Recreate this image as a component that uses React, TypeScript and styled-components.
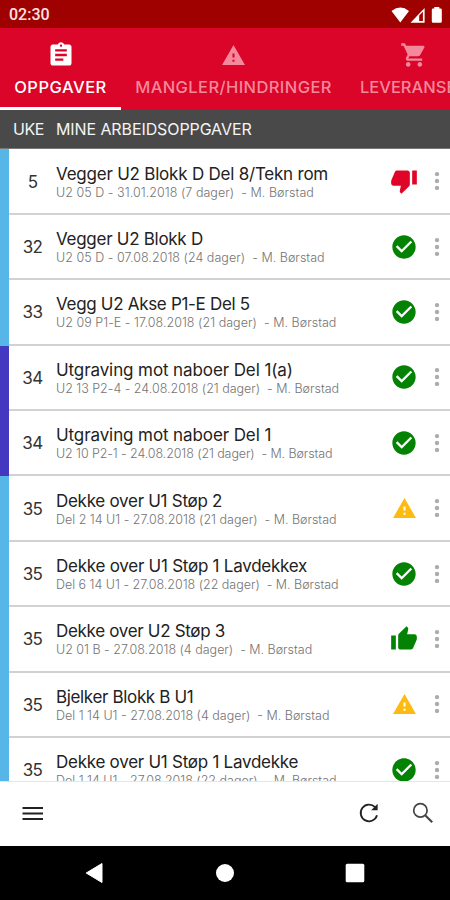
import React from "react";
import styled, { createGlobalStyle } from "styled-components";
import {
  MdAssignment,
  MdWarning,
  MdShoppingCart,
  MdThumbDown,
  MdThumbUp,
  MdCheckCircle,
} from "react-icons/md";

type Status = "rejected" | "done" | "warning" | "approved";

interface Task {
  week: number;
  title: string;
  detail: string;
  status: Status;
  color: string;
  titleSpacing: number;
  detailSpacing: number;
}

const SKY = "#57b6e8";
const INDIGO = "#4338bf";

const tasks: Task[] = [
  { week: 5, title: "Vegger U2 Blokk D Del 8/Tekn rom", detail: "U2 05 D - 31.01.2018 (7 dager)  - M. Børstad", status: "rejected", color: SKY, titleSpacing: -0.22, detailSpacing: 0.04 },
  { week: 32, title: "Vegger U2 Blokk D", detail: "U2 05 D - 07.08.2018 (24 dager)  - M. Børstad", status: "done", color: SKY, titleSpacing: -0.28, detailSpacing: 0.03 },
  { week: 33, title: "Vegg U2 Akse P1-E Del 5", detail: "U2 09 P1-E - 17.08.2018 (21 dager)  - M. Børstad", status: "done", color: SKY, titleSpacing: -0.31, detailSpacing: 0.03 },
  { week: 34, title: "Utgraving mot naboer Del 1(a)", detail: "U2 13 P2-4 - 24.08.2018 (21 dager)  - M. Børstad", status: "done", color: INDIGO, titleSpacing: -0.1, detailSpacing: -0.02 },
  { week: 34, title: "Utgraving mot naboer Del 1", detail: "U2 10 P2-1 - 24.08.2018 (21 dager)  - M. Børstad", status: "done", color: INDIGO, titleSpacing: -0.1, detailSpacing: -0.1 },
  { week: 35, title: "Dekke over U1 Støp 2", detail: "Del 2 14 U1 - 27.08.2018 (21 dager)  - M. Børstad", status: "warning", color: SKY, titleSpacing: -0.28, detailSpacing: -0.01 },
  { week: 35, title: "Dekke over U1 Støp 1 Lavdekkex", detail: "Del 6 14 U1 - 27.08.2018 (22 dager)  - M. Børstad", status: "done", color: SKY, titleSpacing: -0.25, detailSpacing: -0.02 },
  { week: 35, title: "Dekke over U2 Støp 3", detail: "U2 01 B - 27.08.2018 (4 dager)  - M. Børstad", status: "approved", color: SKY, titleSpacing: -0.32, detailSpacing: -0.01 },
  { week: 35, title: "Bjelker Blokk B U1", detail: "Del 1 14 U1 - 27.08.2018 (4 dager)  - M. Børstad", status: "warning", color: SKY, titleSpacing: -0.35, detailSpacing: 0 },
  { week: 35, title: "Dekke over U1 Støp 1 Lavdekke", detail: "Del 1 14 U1 - 27.08.2018 (22 dager)  - M. Børstad", status: "done", color: SKY, titleSpacing: -0.26, detailSpacing: -0.01 },
];

const GlobalStyle = createGlobalStyle`
  * { box-sizing: border-box; }
  body { margin: 0; background: #fff; font-family: Inter, "Open Sans", sans-serif; }
`;

const Screen = styled.div`
  width: 450px;
  height: 900px;
  display: flex;
  flex-direction: column;
  overflow: hidden;
  background: #fff;
`;

const StatusBar = styled.div`
  flex: 0 0 28px;
  display: flex;
  align-items: center;
  justify-content: space-between;
  padding: 1px 7px 0 9px;
  background: #9f0000;
  color: #fbe3e3;
`;

const Clock = styled.span`
  font: 500 16px/20px Roboto, sans-serif;
`;

const SystemIcons = styled.div`
  display: flex;
`;

const Tabs = styled.nav`
  flex: 0 0 82px;
  display: flex;
  overflow: hidden;
  background: #db0429;
`;

const Tab = styled.div<{ $width: number; $active?: boolean }>`
  flex: 0 0 ${(p) => p.$width}px;
  display: flex;
  flex-direction: column;
  align-items: center;
  padding-top: 13px;
  color: ${(p) => (p.$active ? "#fff" : "#f4899c")};
  border-bottom: 3px solid ${(p) => (p.$active ? "#fff" : "transparent")};
`;

const TabIcon = styled.div`
  height: 28px;
  display: flex;
  align-items: center;
`;

const TabLabel = styled.span<{ $spacing: number }>`
  margin-top: 7px;
  font-size: 16.5px;
  line-height: 22px;
  font-weight: 500;
  letter-spacing: ${(p) => p.$spacing}px;
  white-space: nowrap;
`;

const ListHeader = styled.div`
  flex: 0 0 39px;
  display: flex;
  align-items: center;
  padding-left: 13px;
  background: #494949;
  border-bottom: 1px solid #777;
  color: #f4f4f4;
  font-size: 16px;
`;

const WeekHeading = styled.span`
  width: 43px;
  letter-spacing: -0.4px;
`;

const TaskHeading = styled.span`
  letter-spacing: -0.1px;
`;

const List = styled.main`
  flex: 0 0 632px;
  padding-top: 0.5px;
  background: linear-gradient(to right, ${SKY} 9px, #fff 9px);
  overflow: hidden;
`;

const Row = styled.div`
  height: 65.4px;
  display: flex;
`;

const Stripe = styled.div<{ $color: string }>`
  flex: 0 0 9px;
  background: ${(p) => p.$color};
`;

const RowBody = styled.div`
  flex: 1;
  display: flex;
  align-items: center;
  border-bottom: 2px solid #d2d2d2;
`;

const Week = styled.span`
  flex: 0 0 47px;
  text-align: center;
  font-size: 17px;
  letter-spacing: -0.6px;
  color: #333;
  padding-top: 1px;
`;

const TaskText = styled.div`
  flex: 1;
  display: flex;
  flex-direction: column;
  padding-top: 2px;
  white-space: pre;
`;

const Title = styled.span<{ $spacing: number }>`
  font-size: 17px;
  line-height: 21px;
  letter-spacing: ${(p) => p.$spacing}px;
  color: #222;
`;

const Detail = styled.span<{ $spacing: number }>`
  font-size: 12.5px;
  line-height: 16px;
  font-weight: 300;
  letter-spacing: ${(p) => p.$spacing}px;
  color: #747474;
`;

const StatusCell = styled.div`
  flex: 0 0 28px;
  display: flex;
  justify-content: center;
  margin-right: 6px;
`;

const MoreCell = styled.div`
  flex: 0 0 26px;
  display: flex;
  justify-content: center;
`;

const BottomBar = styled.div`
  flex: 0 0 65px;
  display: flex;
  align-items: center;
  padding: 0 15px 2px 20px;
  border-top: 1px solid #e6e6e6;
  background: #fff;
`;

const Spacer = styled.div`
  flex: 1;
`;

const SearchSlot = styled.div`
  margin-left: 30px;
  display: flex;
`;

const SystemNav = styled.div`
  flex: 0 0 54px;
  background: #000;
  display: grid;
  grid-template-columns: repeat(3, 130px);
  justify-content: center;
  justify-items: center;
  align-items: center;
`;

function StatusIcon({ status }: { status: Status }) {
  switch (status) {
    case "rejected":
      return <MdThumbDown size={28} color="#e00526" />;
    case "approved":
      return <MdThumbUp size={28} color="#048204" />;
    case "warning":
      return <MdWarning size={25} color="#fdbb12" />;
    default:
      return <MdCheckCircle size={28} color="#048204" />;
  }
}

export default function App() {
  return (
    <>
      <GlobalStyle />
      <Screen>
        <StatusBar>
          <Clock>02:30</Clock>
          <SystemIcons>
            <svg width="52" height="18" viewBox="0 0 52 18" fill="#fff">
              <path d="M0.5 5Q9.5 -1.8 18 5L9.3 16.5Z" />
              <path fillRule="evenodd" d="M19.5 16.7L33.6 2V16.7ZM28.2 9.5V15H31.9V5.8Z" />
              <path d="M43.3 1h5v1.6h1.2q1.3 0 1.3 1.3v11.6q0 1.3-1.3 1.3h-7.4q-1.3 0-1.3-1.3V3.9q0-1.3 1.3-1.3h1.2z" />
            </svg>
          </SystemIcons>
        </StatusBar>
        <Tabs>
          <Tab $width={121} $active>
            <TabIcon><MdAssignment size={28} /></TabIcon>
            <TabLabel $spacing={0.5}>OPPGAVER</TabLabel>
          </Tab>
          <Tab $width={225}>
            <TabIcon><MdWarning size={25} /></TabIcon>
            <TabLabel $spacing={0.4}>MANGLER/HINDRINGER</TabLabel>
          </Tab>
          <Tab $width={135}>
            <TabIcon><MdShoppingCart size={28} /></TabIcon>
            <TabLabel $spacing={0}>LEVERANSER</TabLabel>
          </Tab>
        </Tabs>
        <ListHeader>
          <WeekHeading>UKE</WeekHeading>
          <TaskHeading>MINE ARBEIDSOPPGAVER</TaskHeading>
        </ListHeader>
        <List>
          {tasks.map((t, i) => (
            <Row key={i}>
              <Stripe $color={t.color} />
              <RowBody>
                <Week>{t.week}</Week>
                <TaskText>
                  <Title $spacing={t.titleSpacing}>{t.title}</Title>
                  <Detail $spacing={t.detailSpacing}>{t.detail}</Detail>
                </TaskText>
                <StatusCell><StatusIcon status={t.status} /></StatusCell>
                <MoreCell>
                  <svg width="6" height="20" viewBox="0 0 6 20" fill="#acacac">
                    <circle cx="3" cy="3.1" r="2.2" />
                    <circle cx="3" cy="10" r="2.2" />
                    <circle cx="3" cy="16.9" r="2.2" />
                  </svg>
                </MoreCell>
              </RowBody>
            </Row>
          ))}
        </List>
        <BottomBar>
          <svg width="25" height="25" viewBox="0 0 25 25" stroke="#222" strokeWidth="1.8">
            <path d="M2.5 7H23M2.5 12.5H23M2.5 18H23" />
          </svg>
          <Spacer />
          <svg width="24" height="24" viewBox="0 0 24 24" fill="none" stroke="#222" strokeWidth="1.8">
            <path d="M20 14.2A8.3 8.3 0 1 1 18 6.2" />
            <path d="M20.6 2.8V9.2H14.2Z" fill="#222" stroke="none" />
          </svg>
          <SearchSlot>
            <svg width="24" height="24" viewBox="0 0 24 24" fill="none" stroke="#444" strokeWidth="1.7">
              <circle cx="9.4" cy="9.4" r="6.7" />
              <path d="M14.2 14.2L21.2 21.2" strokeWidth="2.1" />
            </svg>
          </SearchSlot>
        </BottomBar>
        <SystemNav>
          <svg width="20" height="22" viewBox="0 0 20 22" fill="#fff">
            <path d="M1.2 11L17 1.5V20.5Z" stroke="#fff" strokeWidth="1" strokeLinejoin="round" />
          </svg>
          <svg width="20" height="20" viewBox="0 0 20 20"><circle cx="10" cy="10" r="9" fill="#fff" /></svg>
          <svg width="20" height="20" viewBox="0 0 20 20"><rect x="0.7" y="0.7" width="18.6" height="18.6" rx="1.5" fill="#fff" /></svg>
        </SystemNav>
      </Screen>
    </>
  );
}
